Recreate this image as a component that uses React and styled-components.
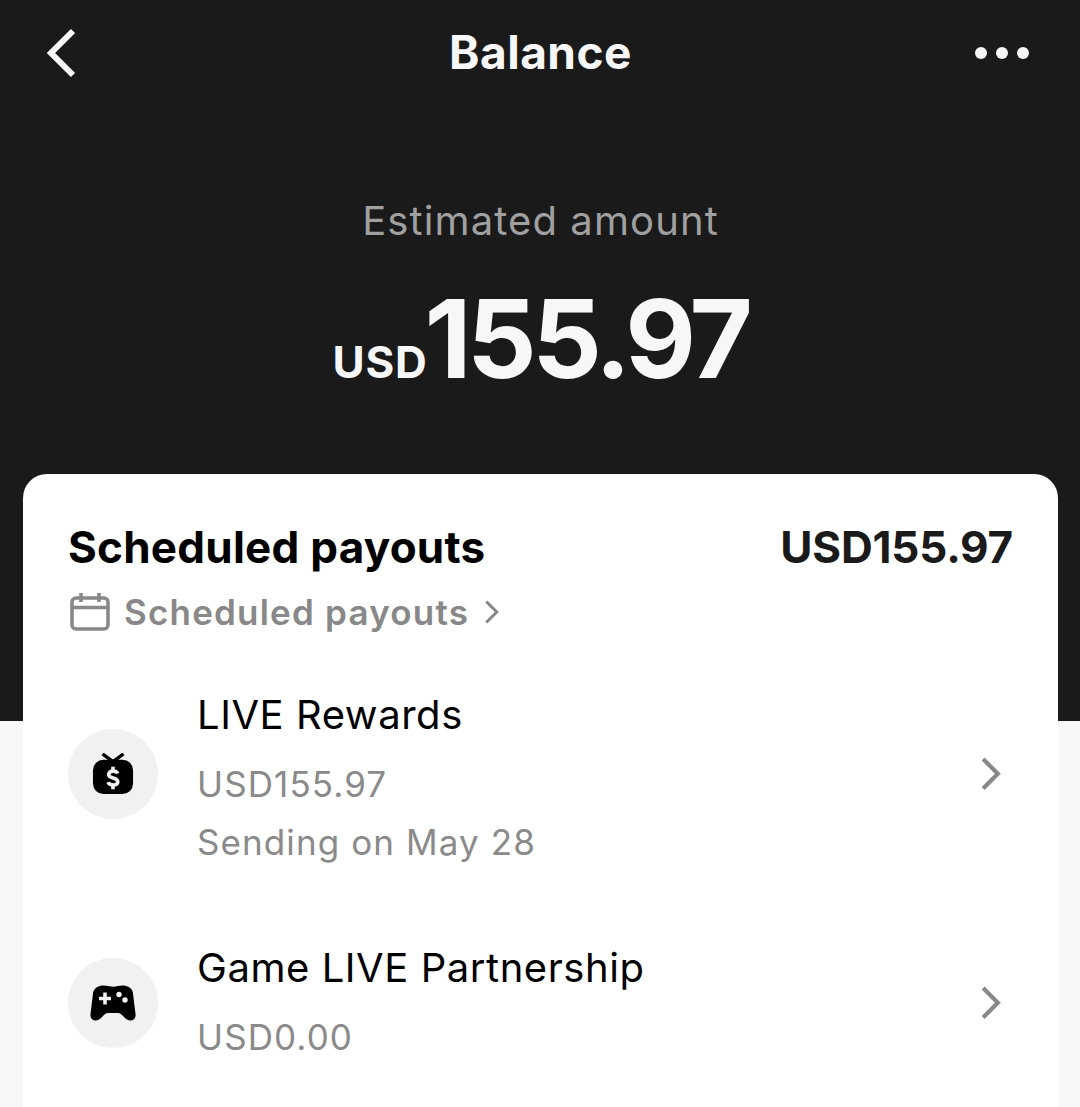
import styled, { createGlobalStyle } from "styled-components";

const GlobalStyle = createGlobalStyle`
  html, body {
    margin: 0;
    padding: 0;
    background: #f8f8f8;
  }
  * {
    box-sizing: border-box;
  }
`;

const payouts = [
  { id: "live", title: "LIVE Rewards", lines: ["USD155.97", "Sending on May 28"], icon: "tv", height: 178 },
  { id: "game", title: "Game LIVE Partnership", lines: ["USD0.00"], icon: "game", height: 130 },
];

const TvIcon = () => (
  <svg width="42" height="42" viewBox="0 0 44 44">
    <path d="M11 1 L22 9 L33 1" fill="none" stroke="#000" strokeWidth="3.6" />
    <rect x="1" y="7" width="42" height="36" rx="11" fill="#000" />
    <path
      d="M27 21.500c-.8-1.700-2.500-2.500-5-2.500s-4.500 1.300-4.500 3.500c0 4.800 9.500 2.500 9.500 7.500 0 2.300-2.200 3.500-5 3.500s-4.500-1.200-5.300-3"
      fill="none"
      stroke="#f1f1f1"
      strokeWidth="3.800"
    />
    <path d="M22 14.500v5M22 33v5" stroke="#f1f1f1" strokeWidth="3.800" />
  </svg>
);

const GameIcon = () => (
  <svg width="46" height="38" viewBox="0 0 46 38">
    <path
      d="M10 2c5-1.200 9 .8 13 .8s8-2 13-.8c3.500.8 6 3 6.800 6l2.700 22c.4 4-1.800 6.500-5 6.500-2.500 0-4.500-1.300-6.500-3.500-2-2.300-3.500-4-6.500-4h-9c-3 0-4.500 1.700-6.500 4-2 2.200-4 3.500-6.500 3.500-3.200 0-5.400-2.500-5-6.500L3.200 8C4 5 6.500 2.800 10 2z"
      fill="#000"
    />
    <path d="M9 14.500h12M15 8.500v12" stroke="#f1f1f1" strokeWidth="3.600" />
    <circle cx="29" cy="10.500" r="2.700" fill="#f1f1f1" />
    <circle cx="35" cy="16" r="2.700" fill="#f1f1f1" />
  </svg>
);

const CalendarIcon = () => (
  <svg width="40" height="38" viewBox="0 0 40 38" fill="none" stroke="#888" strokeWidth="3.600">
    <rect x="2" y="5" width="36" height="31" rx="4" />
    <path d="M2 14.500h36M11 0v9M29 0v9" />
  </svg>
);

const Chevron = ({ size = 22, color = "#888", stroke = 3 }) => (
  <svg width={size} height={size * 1.6} viewBox="0 0 20 32" fill="none" stroke={color} strokeWidth={stroke}>
    <path d="M3 2 L17 16 L3 30" />
  </svg>
);

const PayoutRow = ({ item }) => (
  <Row $height={item.height}>
    <IconCircle>{item.icon === "tv" ? <TvIcon /> : <GameIcon />}</IconCircle>
    <RowText>
      <RowTitle>{item.title}</RowTitle>
      {item.lines.map((line) => (
        <RowLine key={line}>{line}</RowLine>
      ))}
    </RowText>
    <RowArrow>
      <Chevron size={21} stroke={4} />
    </RowArrow>
  </Row>
);

const App = () => {
  return (
    <Page>
      <GlobalStyle />
      <TopBar>
        <BackButton>
          <svg width="30" height="50" viewBox="0 0 30 50" fill="none" stroke="#f7f7f7" strokeWidth="6">
            <path d="M27 3 L5 25 L27 47" />
          </svg>
        </BackButton>
        <Title>Balance</Title>
        <MoreButton>
          <Dot />
          <Dot />
          <Dot />
        </MoreButton>
      </TopBar>
      <Summary>
        <SummaryLabel>Estimated amount</SummaryLabel>
        <Amount>
          <Currency>USD</Currency>
          <BigNumber>155.97</BigNumber>
        </Amount>
      </Summary>
      <Card>
        <CardHead>
          <CardTitle>Scheduled payouts</CardTitle>
          <CardTotal>USD155.97</CardTotal>
        </CardHead>
        <ScheduleLink>
          <CalendarIcon />
          <ScheduleText>Scheduled payouts</ScheduleText>
          <Chevron size={15} stroke={4} />
        </ScheduleLink>
        <RowList>
          {payouts.map((item) => (
            <PayoutRow key={item.id} item={item} />
          ))}
        </RowList>
      </Card>
    </Page>
  );
};

const Page = styled.div`
  width: 1080px;
  height: 1107px;
  overflow: hidden;
  padding: 0 22px 0 23px;
  font-family: Inter, "Liberation Sans", sans-serif;
  background: linear-gradient(#1a1a1a 721px, #f8f8f8 721px);
`;

const TopBar = styled.div`
  display: flex;
  align-items: center;
  justify-content: space-between;
  height: 106px;
  padding: 0 29px 0 23px;
`;

const BackButton = styled.div`
  display: flex;
  width: 141px;
`;

const Title = styled.div`
  margin-bottom: 2px;
  color: #f7f7f7;
  font-size: 46px;
  font-weight: 700;
  letter-spacing: 0.5px;
`;

const MoreButton = styled.div`
  display: flex;
  justify-content: flex-end;
  gap: 9px;
  width: 135px;
`;

const Dot = styled.div`
  width: 12px;
  height: 12px;
  border-radius: 50%;
  background: #f7f7f7;
`;

const Summary = styled.div`
  display: flex;
  flex-direction: column;
  align-items: center;
  height: 368px;
  padding-top: 88px;
`;

const SummaryLabel = styled.div`
  color: #a0a0a0;
  font-size: 40px;
  line-height: 54px;
  letter-spacing: 1.1px;
`;

const Amount = styled.div`
  display: flex;
  align-items: baseline;
  margin-top: 30px;
  color: #f7f7f7;
  font-weight: 700;
`;

const Currency = styled.span`
  margin-right: -3px;
  font-size: 44px;
  letter-spacing: 0.7px;
`;

const BigNumber = styled.span`
  font-size: 109px;
  line-height: 120px;
  letter-spacing: -4.500px;
`;

const Card = styled.div`
  height: 640px;
  padding: 44px 45px 0;
  background: #fff;
  border-radius: 24px 24px 0 0;
`;

const CardHead = styled.div`
  display: flex;
  align-items: center;
  justify-content: space-between;
`;

const CardTitle = styled.div`
  color: #000;
  font-size: 44px;
  font-weight: 700;
  line-height: 58px;
  letter-spacing: 0.25px;
`;

const CardTotal = styled.div`
  color: #1a1a1a;
  font-size: 44px;
  font-weight: 700;
  line-height: 58px;
  letter-spacing: -0.2px;
`;

const ScheduleLink = styled.div`
  display: flex;
  align-items: center;
  margin-top: 13px;
  padding-left: 2px;
  color: #888;
  font-size: 35px;
  font-weight: 600;
  line-height: 46px;
`;

const ScheduleText = styled.span`
  margin: 0 15px 0 14px;
  letter-spacing: 1.200px;
`;

const RowList = styled.div`
  display: flex;
  flex-direction: column;
  gap: 75px;
  margin-top: 50px;
`;

const Row = styled.div`
  display: flex;
  align-items: center;
  height: ${(props) => props.$height}px;
`;

const IconCircle = styled.div`
  display: flex;
  align-items: center;
  justify-content: center;
  width: 90px;
  height: 90px;
  flex-shrink: 0;
  border-radius: 50%;
  background: #f1f1f1;
`;

const RowText = styled.div`
  flex: 1;
  align-self: flex-start;
  margin-left: 39px;
`;

const RowTitle = styled.div`
  margin-bottom: 10px;
  color: #000;
  font-size: 40px;
  line-height: 60px;
  letter-spacing: 0.55px;
`;

const RowLine = styled.div`
  color: #8a8a8a;
  font-size: 35px;
  line-height: 58px;
  letter-spacing: 1.100px;
`;

const RowArrow = styled.div`
  display: flex;
  margin-right: 12px;
`;

export default App;
